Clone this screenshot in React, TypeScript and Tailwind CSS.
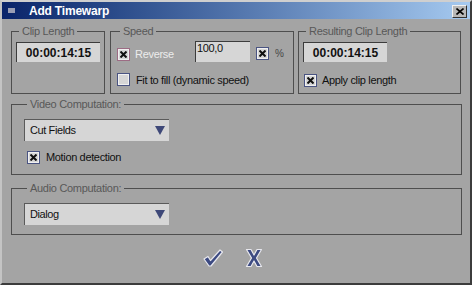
import { ReactNode } from 'react'

const font = { fontFamily: '"Liberation Sans", Arial, sans-serif' }

function Check({ checked, variant = 'normal' }: { checked?: boolean; variant?: 'normal' | 'pink' }) {
    const outer = variant === 'pink' ? 'border-[#9c6c84]' : 'border-[#4a5482]'
    return (
        <span className={`flex h-[13px] w-[13px] shrink-0 items-center justify-center border ${outer} bg-[#d6d6d6] shadow-[inset_0_0_0_1px_#f0f0f0]`}>
            {checked && (
                <svg width="7" height="7" viewBox="0 0 7 7">
                    <path d="M0.5 0.5L6.5 6.5M6.5 0.5L0.5 6.5" stroke="#101010" strokeWidth="2" />
                </svg>
            )}
        </span>
    )
}

function Group({ title, className, children }: { title: string; className: string; children: ReactNode }) {
    return (
        <fieldset className={`border border-[#4e4e4e] ${className}`}>
            <legend className="ml-[3px] px-[3px] text-[11px] leading-[13px] tracking-[-0.3px] text-[#585858]">
                {title}
            </legend>
            {children}
        </fieldset>
    )
}

function TimeField() {
    return (
        <div className="flex h-[20px] w-[84px] items-center justify-center border-t border-l border-[#3c3c3c] bg-[#d6d6d6] text-[12px] font-bold text-[#111]">
            00:00:14:15
        </div>
    )
}

function Dropdown({ value }: { value: string }) {
    return (
        <div className="flex h-[22px] w-[145px] items-center justify-between border-t border-l border-[#5a5a5a] bg-[#d6d6d6] pl-[5px] pr-[4px] text-[11px] tracking-[-0.4px] text-[#111]">
            <span>{value}</span>
            <svg width="10" height="9" viewBox="0 0 10 9">
                <path d="M0 0H10L5 9Z" fill="#3e4878" />
            </svg>
        </div>
    )
}

export default function App() {
    return (
        <div
            style={font}
            className="flex h-[285px] w-[472px] flex-col border-t-2 border-l-2 border-r-2 border-b-2 border-t-[#cfcfcf] border-l-[#c4c4c4] border-r-[#3c3c3c] border-b-[#3c3c3c] bg-[#a4a4a4]"
        >
            {/* title bar */}
            <div className="flex h-[17px] items-center bg-gradient-to-r from-[#0a246a] to-[#a6caf0] pr-[3px]">
                <span className="ml-[6px] h-[5px] w-[7px] bg-[#9a9eb4]" />
                <span className="ml-[14px] text-[12px] font-bold tracking-[-0.2px] text-white">Add Timewarp</span>
                <span className="ml-auto mt-[2px] flex h-[13px] w-[15px] items-center justify-center border border-t-[#f0f0f0] border-l-[#f0f0f0] border-r-[#303030] border-b-[#303030] bg-[#b8b8b8]">
                    <svg width="8" height="7" viewBox="0 0 8 7">
                        <path d="M0.5 0.5L7.5 6.5M7.5 0.5L0.5 6.5" stroke="#000" strokeWidth="1.6" />
                    </svg>
                </span>
            </div>

            <div className="flex flex-col pl-[9px] pt-[6px]">
                <div className="flex">
                    <Group title="Clip Length" className="h-[69px] w-[94px] px-[4px] pt-[4px]">
                        <TimeField />
                    </Group>
                    <Group title="Speed" className="ml-[5px] h-[69px] w-[184px] pl-[6px] pt-[3px]">
                        <div className="flex items-start">
                            <div className="mt-[5px] flex items-center gap-[5px]">
                                <Check checked variant="pink" />
                                <span className="text-[11px] tracking-[-0.3px] text-[#ececec]">Reverse</span>
                            </div>
                            <div className="ml-[21px] h-[21px] w-[55px] border-t border-l border-[#3c3c3c] bg-[#d6d6d6] pl-[1px] text-[11px] leading-[13px] tracking-[-0.3px] text-[#111]">
                                100,0
                            </div>
                            <div className="ml-[6px] mt-[5px] flex items-center gap-[6px]">
                                <Check checked />
                                <span className="text-[10px] text-[#444]">%</span>
                            </div>
                        </div>
                        <div className="mt-[9px] flex items-center gap-[6px]">
                            <Check />
                            <span className="text-[11px] tracking-[-0.35px] text-[#111]">Fit to fill (dynamic speed)</span>
                        </div>
                    </Group>
                    <Group title="Resulting Clip Length" className="ml-[4px] h-[69px] w-[163px] px-[4px] pt-[4px]">
                        <TimeField />
                        <div className="mt-[10px] flex items-center gap-[5px] pl-[1px]">
                            <Check checked />
                            <span className="text-[11px] tracking-[-0.35px] text-[#111]">Apply clip length</span>
                        </div>
                    </Group>
                </div>

                <Group title="Video Computation:" className="mt-[4px] h-[77px] w-[451px] pl-[12px] pt-[8px]">
                    <Dropdown value="Cut Fields" />
                    <div className="ml-[3px] mt-[8px] flex items-center gap-[6px]">
                        <Check checked />
                        <span className="text-[11px] tracking-[-0.35px] text-[#111]">Motion detection</span>
                    </div>
                </Group>

                <Group title="Audio Computation:" className="mt-[7px] h-[53px] w-[451px] pl-[12px] pt-[8px]">
                    <Dropdown value="Dialog" />
                </Group>

                <div className="mt-[13px] flex items-center justify-center gap-[21px] pr-[16px]">
                    <svg width="22" height="20" viewBox="0 0 22 20">
                        <path
                            d="M2 11L6 8.5L8.5 12.5L18 2L20.5 4L9 18L7 18Z"
                            fill="#3c4a82"
                            stroke="#e8e8ee"
                            strokeWidth="1.2"
                            strokeLinejoin="round"
                        />
                    </svg>
                    <svg width="18" height="20" viewBox="0 0 18 20">
                        <path
                            d="M1.5 1.5H6L9 7L12 1.5H16.5L11.5 10L16.5 18.5H12L9 13L6 18.5H1.5L6.5 10Z"
                            fill="#3c4a82"
                            stroke="#e8e8ee"
                            strokeWidth="1.2"
                            strokeLinejoin="round"
                        />
                    </svg>
                </div>
            </div>
        </div>
    )
}
